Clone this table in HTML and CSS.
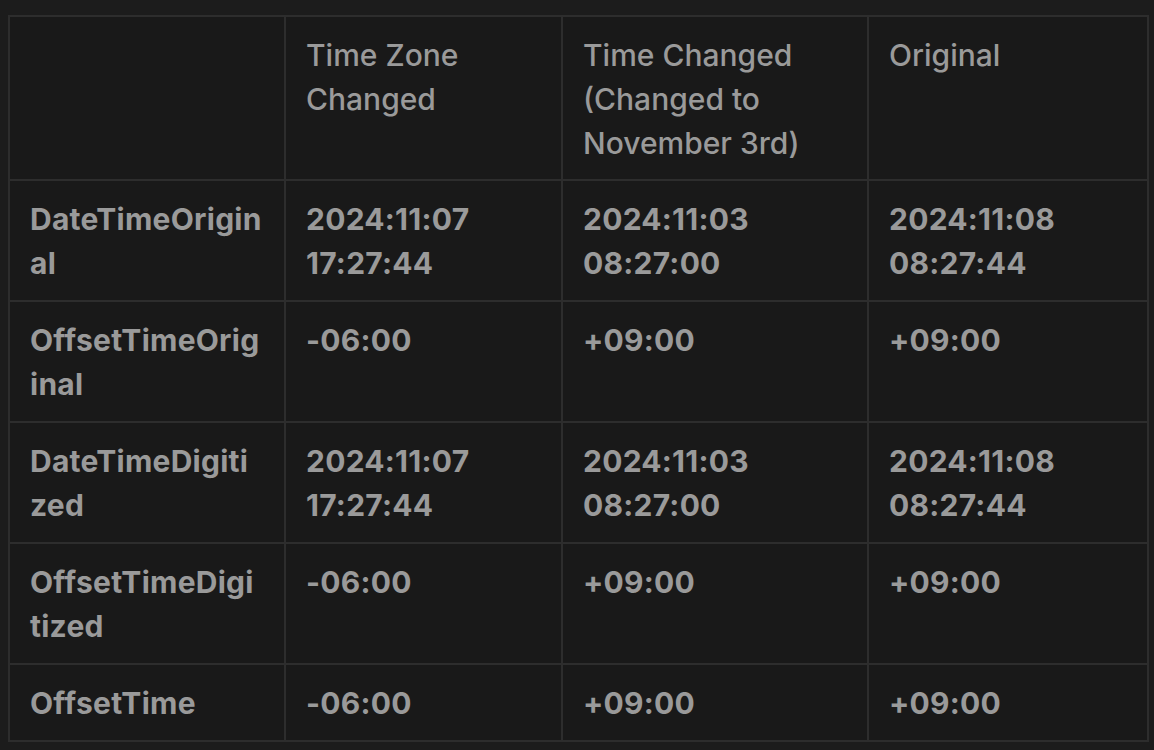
FILE: index.html
```html
<!DOCTYPE html>
<html>
<head>
<meta charset="utf-8">
<link rel="stylesheet" href="styles.css">
</head>
<body>
<table class="exif">
  <colgroup>
    <col class="c1"><col class="c2"><col class="c3"><col class="c4">
  </colgroup>
  <thead>
    <tr>
      <th></th>
      <th>Time Zone Changed</th>
      <th>Time Changed (Changed to November 3rd)</th>
      <th>Original</th>
    </tr>
  </thead>
  <tbody>
    <tr>
      <td>DateTimeOriginal</td>
      <td>2024:11:07 17:27:44</td>
      <td>2024:11:03 08:27:00</td>
      <td>2024:11:08 08:27:44</td>
    </tr>
    <tr>
      <td>OffsetTimeOriginal</td>
      <td>-06:00</td>
      <td>+09:00</td>
      <td>+09:00</td>
    </tr>
    <tr>
      <td>DateTimeDigitized</td>
      <td>2024:11:07 17:27:44</td>
      <td>2024:11:03 08:27:00</td>
      <td>2024:11:08 08:27:44</td>
    </tr>
    <tr>
      <td>OffsetTimeDigitized</td>
      <td>-06:00</td>
      <td>+09:00</td>
      <td>+09:00</td>
    </tr>
    <tr>
      <td>OffsetTime</td>
      <td>-06:00</td>
      <td>+09:00</td>
      <td>+09:00</td>
    </tr>
  </tbody>
</table>
</body>
</html>
```
FILE: styles.css
```css
html, body {
  background: #1c1c1c;
}
body {
  margin: 15px 0 0 8px;
  font-family: Inter, "Noto Sans", sans-serif;
  color: #9a9a9a;
}
.exif {
  border-collapse: collapse;
  table-layout: fixed;
  width: 1139px;
  background: #191919;
  font-size: 30px;
  line-height: 44px;
}
.c1 { width: 276px; }
.c2 { width: 277px; }
.c3 { width: 306px; }
.c4 { width: 280px; }
.exif th,
.exif td {
  border: 2px solid #2d2d2d;
  padding: 16px 22px 15px 20px;
  text-align: left;
  vertical-align: top;
  overflow-wrap: anywhere;
}
.exif thead th {
  font-weight: 500;
  padding-bottom: 14px;
}
.exif td {
  font-weight: 700;
  letter-spacing: 0.25px;
}
```
